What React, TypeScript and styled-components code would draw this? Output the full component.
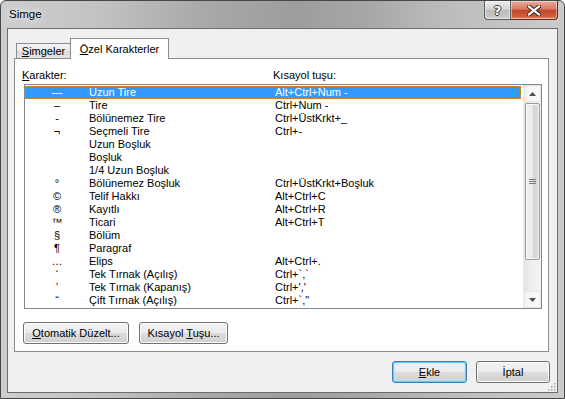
import React from 'react';
import styled, { createGlobalStyle } from 'styled-components';

const GlobalStyle = createGlobalStyle`
  html, body {
    margin: 0;
    padding: 0;
  }
  body {
    width: 565px;
    height: 399px;
    overflow: hidden;
    background: #ffffff;
    font-family: "Liberation Sans", Arial, sans-serif;
    font-size: 11px;
    color: #000;
  }
`;

const Window = styled.div`
  position: relative;
  box-sizing: border-box;
  width: 565px;
  height: 399px;
  display: flex;
  flex-direction: column;
  border: 1px solid #474747;
  border-radius: 6px 6px 0 0;
  overflow: hidden;
  background: linear-gradient(
    90deg,
    #cdcecf 0%,
    #c2c2c2 18%,
    #a9a9a9 36%,
    #9d9d9d 52%,
    #a6a6a6 64%,
    #bdbdbd 80%,
    #cbcbcb 100%
  );
`;

const TitleBar = styled.div`
  height: 27px;
  display: flex;
  align-items: flex-start;
  padding-left: 8px;
`;

const Caption = styled.div`
  line-height: 27px;
  font-size: 11.5px;
  color: #000;
  text-shadow: 0 0 6px rgba(255, 255, 255, 0.9), 0 0 10px rgba(255, 255, 255, 0.7);
`;

const CaptionButtons = styled.div`
  margin-left: auto;
  margin-right: 6px;
  display: flex;
`;

const CaptionButton = styled.div<{ $close?: boolean }>`
  box-sizing: border-box;
  width: ${(p) => (p.$close ? 47 : 27)}px;
  height: 19px;
  display: flex;
  align-items: center;
  justify-content: center;
  border: 1px solid ${(p) => (p.$close ? '#5b2a20' : '#5c5c5c')};
  border-top: none;
  border-left-width: ${(p) => (p.$close ? 0 : 1)}px;
  border-radius: ${(p) => (p.$close ? '0 0 4px 0' : '0 0 0 4px')};
  background: ${(p) =>
    p.$close
      ? 'linear-gradient(#e8ab9c 0%, #d97a63 45%, #c4452a 52%, #cf5d3d 85%, #e08a68 100%)'
      : 'linear-gradient(#ececec 0%, #d6d6d6 45%, #bcbcbc 52%, #c6c6c6 85%, #d4d4d4 100%)'};
  box-shadow: inset 0 0 0 1px rgba(255, 255, 255, 0.45);
`;

const HelpGlyph = styled.span`
  font-family: "DejaVu Sans", sans-serif;
  font-weight: bold;
  font-size: 13px;
  color: #fff;
  text-shadow: 1px 0 0 #3b3b3b, -1px 0 0 #3b3b3b, 0 1px 0 #3b3b3b, 0 -1px 0 #3b3b3b;
`;

const Client = styled.div`
  position: relative;
  flex: 1;
  margin: 0 6px 5px 6px;
  border: 1px solid #6c6c6c;
  background: #f0f0f0;
  display: flex;
  flex-direction: column;
  padding: 9px 0 9px 6px;
`;

const TabStrip = styled.div`
  height: 20px;
  display: flex;
  align-items: flex-end;
  padding-left: 2px;
`;

const Tab = styled.div<{ $active?: boolean; $w: number }>`
  box-sizing: border-box;
  position: relative;
  z-index: ${(p) => (p.$active ? 2 : 1)};
  width: ${(p) => p.$w}px;
  height: ${(p) => (p.$active ? 21 : 15)}px;
  margin-bottom: ${(p) => (p.$active ? -1 : 0)}px;
  display: flex;
  align-items: center;
  justify-content: center;
  border: 1px solid #898c95;
  border-bottom: none;
  border-right-width: ${(p) => (p.$active ? 1 : 0)}px;
  background: ${(p) =>
    p.$active ? '#ffffff' : 'linear-gradient(#f4f4f4 0%, #e9e9e9 50%, #dcdcdc 52%, #e3e3e3 100%)'};
  white-space: nowrap;
`;

const Panel = styled.div`
  flex: 1;
  margin-right: 8px;
  border: 1px solid #898c95;
  background: #ffffff;
  display: flex;
  flex-direction: column;
  padding: 10px 0 0 0;
`;

const LabelRow = styled.div`
  display: grid;
  grid-template-columns: 251px 1fr;
  padding-left: 7px;
  line-height: 13px;
`;

const U = styled.span`
  text-decoration: underline;
  text-underline-offset: 1px;
`;

const ListBox = styled.div`
  margin: 2px 0 0 9px;
  width: 518px;
  height: 225px;
  box-sizing: border-box;
  border: 1px solid #828790;
  display: flex;
  background: #fff;
`;

const Rows = styled.div`
  flex: 1;
  padding-top: 1px;
  margin-right: 2px;
`;

const Row = styled.div<{ $selected?: boolean }>`
  display: grid;
  grid-template-columns: 64px 186px 1fr;
  height: 13px;
  line-height: 13px;
  white-space: nowrap;
  background: ${(p) => (p.$selected ? '#3399ff' : 'transparent')};
  color: ${(p) => (p.$selected ? '#ffffff' : '#000000')};
  outline: ${(p) => (p.$selected ? '1px dotted #d9862b' : 'none')};
  outline-offset: -1px;
`;

const CharCell = styled.span`
  text-align: center;
  font-size: 11px;
`;

const ScrollBar = styled.div`
  width: 17px;
  display: flex;
  flex-direction: column;
  background: linear-gradient(90deg, #e3e3e3 0%, #eeeeee 40%, #f4f4f4 100%);
  border-left: 1px solid #ececec;
`;

const ArrowButton = styled.div`
  height: 17px;
  display: flex;
  align-items: center;
  justify-content: center;
  background: linear-gradient(90deg, #f3f3f3, #fafafa);
  border: 1px solid #e6e6e6;
  box-sizing: border-box;
`;

const Thumb = styled.div`
  box-sizing: border-box;
  margin: 1px 1px 0 1px;
  height: 157px;
  border: 1px solid #9a9a9a;
  border-radius: 2px;
  background: linear-gradient(90deg, #f2f2f2 0%, #e9e9e9 50%, #d6d6d6 51%, #dadada 100%);
  box-shadow: inset 0 0 0 1px rgba(255, 255, 255, 0.7);
  display: flex;
  align-items: center;
  justify-content: center;
`;

const Track = styled.div`
  flex: 1;
`;

const ButtonRow = styled.div`
  display: flex;
  gap: 10px;
  margin-top: 13px;
  padding-left: 8px;
`;

const Button = styled.div<{ $w: number; $default?: boolean }>`
  box-sizing: border-box;
  width: ${(p) => p.$w}px;
  height: 22px;
  display: flex;
  align-items: center;
  justify-content: center;
  border: 1px solid ${(p) => (p.$default ? '#3c7fb1' : '#707070')};
  border-radius: 3px;
  background: linear-gradient(#f2f2f2 0%, #ebebeb 50%, #dddddd 51%, #cfcfcf 100%);
  box-shadow: ${(p) =>
    p.$default
      ? 'inset 0 0 0 1px #5fcdf8, inset 0 0 3px 1px #b6e6fb'
      : 'inset 0 0 0 1px #fcfcfc'};
  white-space: nowrap;
`;

const Footer = styled.div`
  display: flex;
  justify-content: flex-end;
  gap: 9px;
  margin-top: 9px;
  padding-right: 7px;
`;

const Grip = styled.svg`
  position: absolute;
  right: 1px;
  bottom: 1px;
`;

const rows = [
  { ch: '—', name: 'Uzun Tire', key: 'Alt+Ctrl+Num -' },
  { ch: '–', name: 'Tire', key: 'Ctrl+Num -' },
  { ch: '-', name: 'Bölünemez Tire', key: 'Ctrl+ÜstKrkt+_' },
  { ch: '¬', name: 'Seçmeli Tire', key: 'Ctrl+-' },
  { ch: '', name: 'Uzun Boşluk', key: '' },
  { ch: '', name: 'Boşluk', key: '' },
  { ch: '', name: '1/4 Uzun Boşluk', key: '' },
  { ch: '°', name: 'Bölünemez Boşluk', key: 'Ctrl+ÜstKrkt+Boşluk' },
  { ch: '©', name: 'Telif Hakkı', key: 'Alt+Ctrl+C' },
  { ch: '®', name: 'Kayıtlı', key: 'Alt+Ctrl+R' },
  { ch: '™', name: 'Ticari', key: 'Alt+Ctrl+T' },
  { ch: '§', name: 'Bölüm', key: '' },
  { ch: '¶', name: 'Paragraf', key: '' },
  { ch: '…', name: 'Elips', key: 'Alt+Ctrl+.' },
  { ch: '‘', name: 'Tek Tırnak (Açılış)', key: "Ctrl+`,`" },
  { ch: '’', name: 'Tek Tırnak (Kapanış)', key: "Ctrl+','" },
  { ch: '“', name: 'Çift Tırnak (Açılış)', key: 'Ctrl+`,"' },
];

const App: React.FC = () => {
  return (
    <>
      <GlobalStyle />
      <Window>
        <TitleBar>
          <Caption>Simge</Caption>
          <CaptionButtons>
            <CaptionButton>
              <HelpGlyph>?</HelpGlyph>
            </CaptionButton>
            <CaptionButton $close>
              <svg width="14" height="11" viewBox="0 0 14 11">
                <path d="M2 1.5 L12 9.5 M12 1.5 L2 9.5" stroke="#3a2a26" strokeWidth="4.2" strokeLinecap="square" />
                <path d="M2 1.5 L12 9.5 M12 1.5 L2 9.5" stroke="#ffffff" strokeWidth="2.2" strokeLinecap="square" />
              </svg>
            </CaptionButton>
          </CaptionButtons>
        </TitleBar>

        <Client>
          <TabStrip>
            <Tab $w={54}>
              <span>
                <U>S</U>imgeler
              </span>
            </Tab>
            <Tab $active $w={99}>
              <span>
                <U>Ö</U>zel Karakterler
              </span>
            </Tab>
          </TabStrip>

          <Panel>
            <LabelRow>
              <span>
                <U>K</U>arakter:
              </span>
              <span>Kısayol tuşu:</span>
            </LabelRow>

            <ListBox>
              <Rows>
                {rows.map((r, i) => (
                  <Row key={r.name} $selected={i === 0}>
                    <CharCell>{r.ch}</CharCell>
                    <span>{r.name}</span>
                    <span>{r.key}</span>
                  </Row>
                ))}
              </Rows>
              <ScrollBar>
                <ArrowButton>
                  <svg width="7" height="4" viewBox="0 0 7 4">
                    <path d="M3.5 0 L7 4 L0 4 Z" fill="#4d4d4d" />
                  </svg>
                </ArrowButton>
                <Thumb>
                  <svg width="7" height="6" viewBox="0 0 7 6">
                    <path d="M0 0.5 H7 M0 2.5 H7 M0 4.5 H7" stroke="#7a7a7a" strokeWidth="1" />
                  </svg>
                </Thumb>
                <Track />
                <ArrowButton>
                  <svg width="7" height="4" viewBox="0 0 7 4">
                    <path d="M0 0 L7 0 L3.5 4 Z" fill="#4d4d4d" />
                  </svg>
                </ArrowButton>
              </ScrollBar>
            </ListBox>

            <ButtonRow>
              <Button $w={106}>
                <span>
                  <U>O</U>tomatik Düzelt...
                </span>
              </Button>
              <Button $w={89}>
                <span>
                  Kısayol <U>T</U>uşu...
                </span>
              </Button>
            </ButtonRow>
          </Panel>

          <Footer>
            <Button $w={75} $default>
              <span>
                <U>E</U>kle
              </span>
            </Button>
            <Button $w={74}>İptal</Button>
          </Footer>

          <Grip width="10" height="10" viewBox="0 0 10 10">
            <g fill="#a0a0a0">
              <rect x="8" y="2" width="1.5" height="1.5" />
              <rect x="5" y="5" width="1.5" height="1.5" />
              <rect x="8" y="5" width="1.5" height="1.5" />
              <rect x="2" y="8" width="1.5" height="1.5" />
              <rect x="5" y="8" width="1.5" height="1.5" />
              <rect x="8" y="8" width="1.5" height="1.5" />
            </g>
          </Grip>
        </Client>
      </Window>
    </>
  );
};

export default App;
